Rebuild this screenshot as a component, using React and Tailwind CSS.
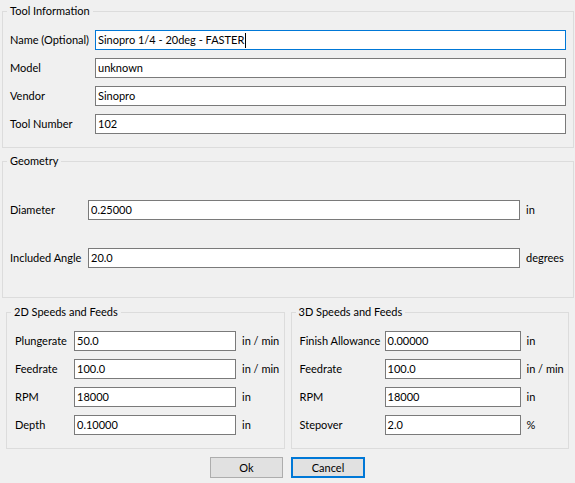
import React from 'react';

const font = { fontFamily: 'Lato, "Noto Sans", sans-serif' };

// classic dialog group box: light frame with the caption sitting on its top edge
const GroupBox = ({ title, className = '', children }) => (
    <div className={`relative border border-[#dcdcdc] ${className}`}>
        <span className="absolute -top-[9px] left-[4px] bg-[#f0f0f0] px-[3px] leading-[16px] whitespace-nowrap">{title}</span>
        {children}
    </div>
);

const TextBox = ({ value, focused, className = '' }) => (
    <div className={`h-[20px] bg-white border flex items-center pl-[2px] leading-[16px] whitespace-nowrap ${focused ? 'border-[#0078d7]' : 'border-[#7a7a7a]'} ${className}`}>
        {value}
        {focused && <span className="inline-block w-px h-[15px] bg-black ml-px" />}
    </div>
);

const Row = ({ label, labelW, value, inputW, unit, focused }) => (
    <div className="flex items-center h-[20px]">
        <div className={`${labelW} shrink-0 leading-[16px] whitespace-nowrap`}>{label}</div>
        <TextBox value={value} focused={focused} className={inputW} />
        {unit && <div className="ml-[6px] leading-[16px] whitespace-nowrap">{unit}</div>}
    </div>
);

const toolInfo = [
    { label: 'Name (Optional)', value: 'Sinopro 1/4 - 20deg - FASTER', focused: true },
    { label: 'Model', value: 'unknown' },
    { label: 'Vendor', value: 'Sinopro' },
    { label: 'Tool Number', value: '102' },
];

const speeds2d = [
    { label: 'Plungerate', value: '50.0', unit: 'in / min' },
    { label: 'Feedrate', value: '100.0', unit: 'in / min' },
    { label: 'RPM', value: '18000', unit: 'in' },
    { label: 'Depth', value: '0.10000', unit: 'in' },
];

const speeds3d = [
    { label: 'Finish Allowance', value: '0.00000', unit: 'in' },
    { label: 'Feedrate', value: '100.0', unit: 'in / min' },
    { label: 'RPM', value: '18000', unit: 'in' },
    { label: 'Stepover', value: '2.0', unit: '%' },
];

export default function App() {
    return (
        <div className="w-[575px] h-[483px] bg-[#f0f0f0] text-[11px] text-black overflow-hidden" style={font}>
            <div className="pt-[11px] pl-[2px] pr-[1px]">
                <GroupBox title="Tool Information" className="pt-[18px] pb-[13px] pl-[7px] pr-[7px]">
                    <div className="flex flex-col gap-[8px]">
                        {toolInfo.map((r) => (
                            <Row key={r.label} label={r.label} labelW="w-[85px]" value={r.value} inputW="flex-1" focused={r.focused} />
                        ))}
                    </div>
                </GroupBox>

                <GroupBox title="Geometry" className="mt-[13px] pt-[38px] pb-[29px] pl-[7px] pr-[8px]">
                    <div className="flex flex-col gap-[28px]">
                        <Row label="Diameter" labelW="w-[78px]" value="0.25000" inputW="w-[432px]" unit="in" />
                        <Row label="Included Angle" labelW="w-[78px]" value="20.0" inputW="w-[432px]" unit="degrees" />
                    </div>
                </GroupBox>
            </div>

            <div className="flex gap-[6px] px-[6px] mt-[14px]">
                <GroupBox title="2D Speeds and Feeds" className="w-[279px] h-[137px] pt-[18px] pl-[8px]">
                    <div className="flex flex-col gap-[8px]">
                        {speeds2d.map((r) => (
                            <Row key={r.label} label={r.label} labelW="w-[59px]" value={r.value} inputW="w-[162px]" unit={r.unit} />
                        ))}
                    </div>
                </GroupBox>
                <GroupBox title="3D Speeds and Feeds" className="w-[279px] h-[137px] pt-[18px] pl-[8px]">
                    <div className="flex flex-col gap-[8px]">
                        {speeds3d.map((r) => (
                            <Row key={r.label} label={r.label} labelW="w-[85px]" value={r.value} inputW="w-[136px]" unit={r.unit} />
                        ))}
                    </div>
                </GroupBox>
            </div>

            <div className="flex justify-center gap-[8px] mt-[8px]">
                <button className="w-[73px] h-[21px] bg-[#e1e1e1] border border-[#adadad] leading-[16px]">Ok</button>
                <button className="w-[74px] h-[21px] bg-[#e1e1e1] border-2 border-[#0078d7] leading-[16px]">Cancel</button>
            </div>
        </div>
    );
}
